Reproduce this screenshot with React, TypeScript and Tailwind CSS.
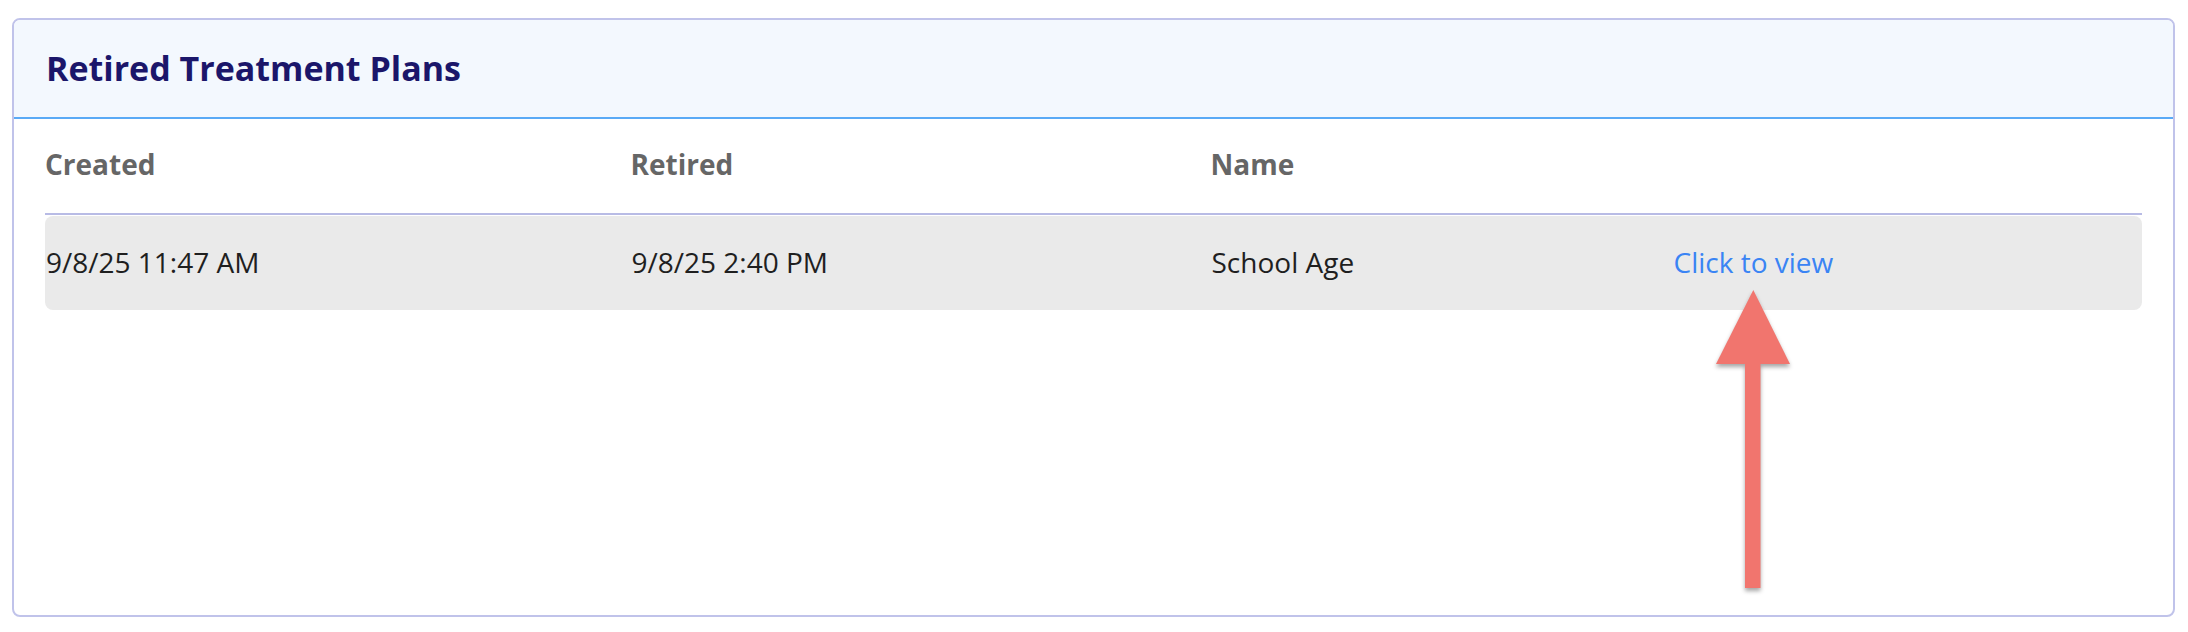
const rows = [
    {created: "9/8/25 11:47 AM", retired: "9/8/25 2:40 PM", name: "School Age"},
]

const UpArrow = () => (
    <svg
        width="74"
        height="298"
        viewBox="0 0 74 298"
        className="absolute left-[1716px] top-[290px] drop-shadow-[0_3px_2px_rgba(0,0,0,0.35)]"
    >
        <polygon points="37.3,0 74,74 0,74" fill="#f1756e"/>
        <rect x="29" y="73" width="15.5" height="225" fill="#f1756e"/>
    </svg>
)

const App = () => {
    return (
        <div className="relative w-[2188px] h-[632px] bg-white font-['Open_Sans',sans-serif]">
            <div className="pt-[18px] pl-[12px]">
                <div className="w-[2163px] h-[599px] rounded-[8px] border-2 border-[#c0c3ea] overflow-hidden bg-white">
                    {/* Header */}
                    <div className="h-[99px] flex items-center pl-[32px] bg-[#f3f8fe] border-b-2 border-[#5aaaf6]">
                        <h2 className="text-[34px] font-bold text-[#1b166a]">Retired Treatment Plans</h2>
                    </div>

                    {/* Table */}
                    <div className="px-[31px]">
                        <div
                            className="grid grid-cols-[585.5px_580px_462px_1fr] pt-[24px] pb-[28px] border-b-2 border-[#b8bbe5] text-[28px] font-bold text-[#666666]">
                            <div>Created</div>
                            <div>Retired</div>
                            <div>Name</div>
                            <div></div>
                        </div>
                        {rows.map((row) => (
                            <div
                                key={row.created}
                                className="mt-[1px] h-[94px] grid grid-cols-[585.5px_580px_462px_1fr] items-center rounded-[8px] bg-[#eaeaea] pl-[1px] pb-[2px] text-[28px] text-[#1f1f1f]"
                            >
                                <div>{row.created}</div>
                                <div>{row.retired}</div>
                                <div>{row.name}</div>
                                <div>
                                    <a href="#" className="text-[#3a84f4]">Click to view</a>
                                </div>
                            </div>
                        ))}
                    </div>
                </div>
            </div>
            <UpArrow/>
        </div>
    )
}

export default App;
